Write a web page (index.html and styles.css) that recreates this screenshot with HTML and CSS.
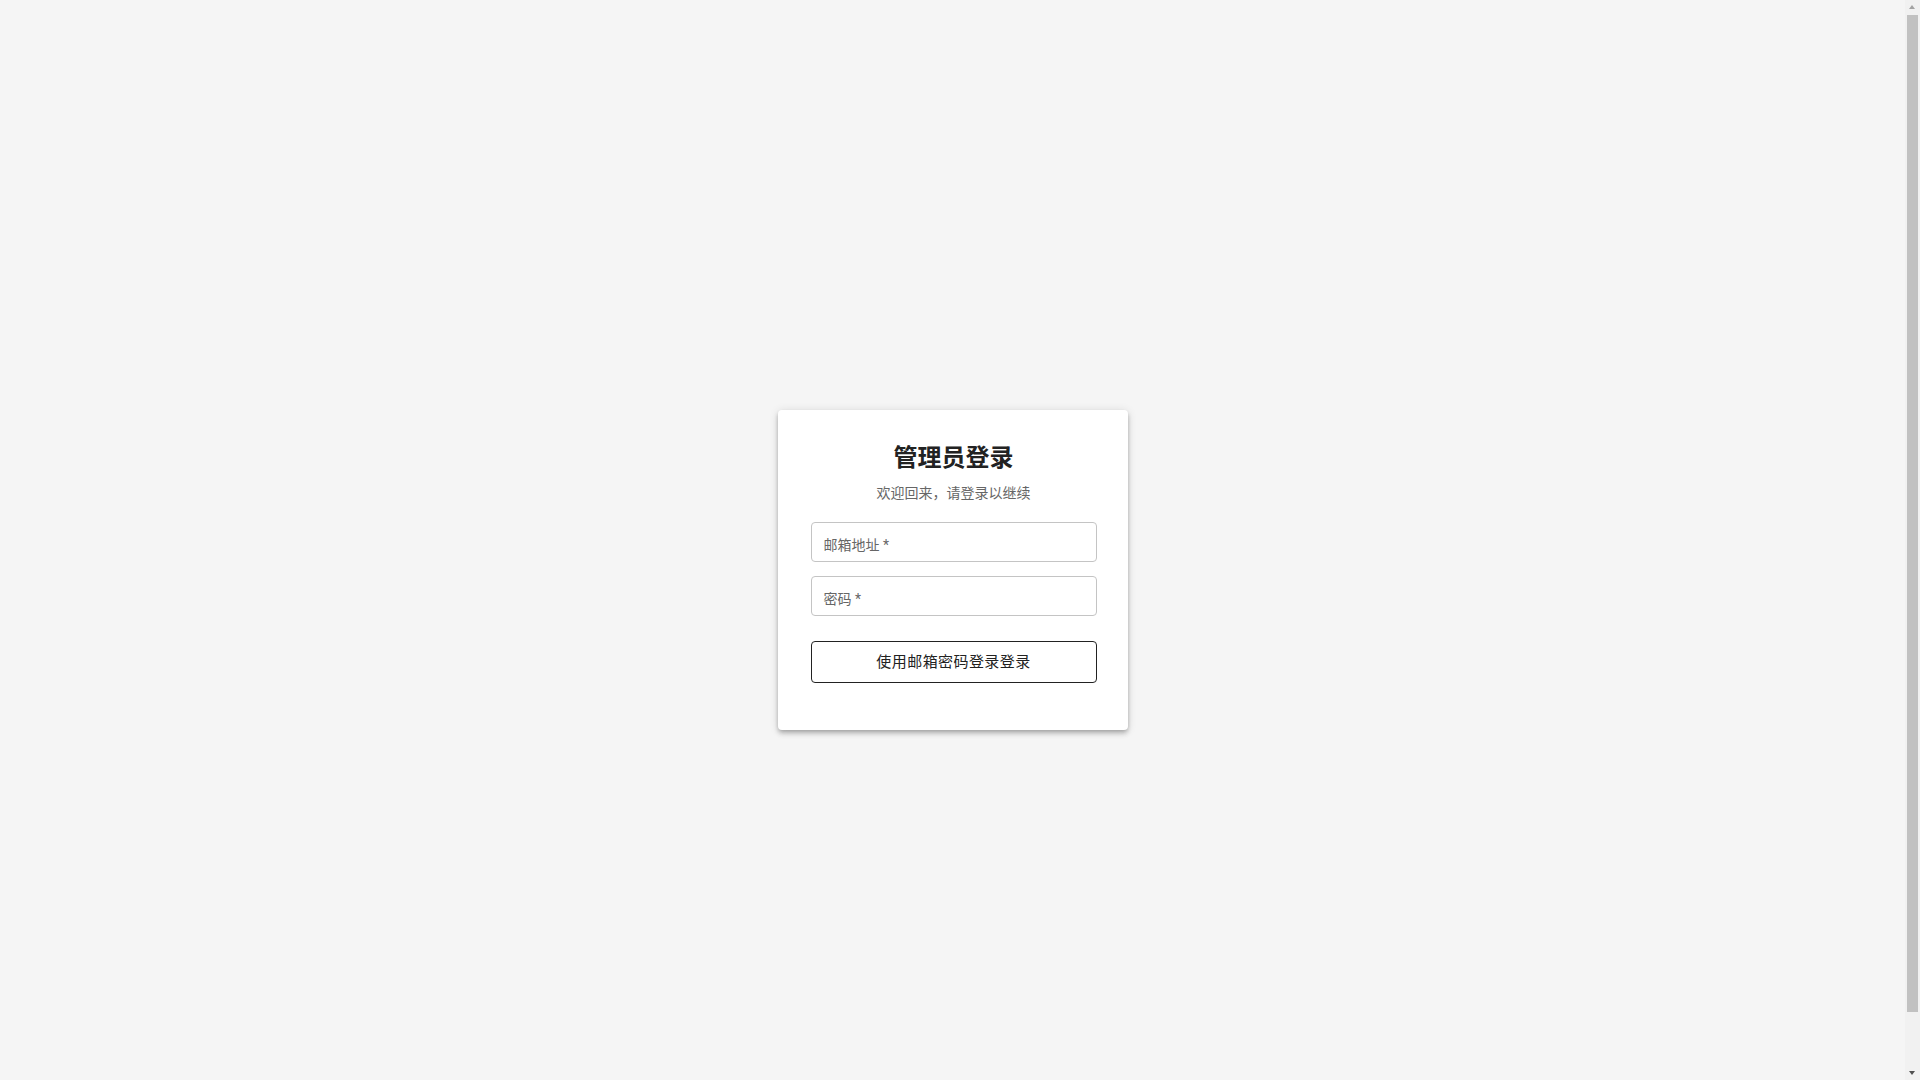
FILE: index.html
```html
<!DOCTYPE html>
<html lang="zh-CN">
<head>
<meta charset="utf-8">
<title>管理员登录</title>
<link rel="stylesheet" href="styles.css">
</head>
<body>
<main class="page">
  <section class="card">
    <h1 class="title">管理员登录</h1>
    <p class="subtitle">欢迎回来，请登录以继续</p>
    <form class="form">
      <label class="field">
        <span class="field-label">邮箱地址 *</span>
        <input class="field-input" type="email">
      </label>
      <label class="field">
        <span class="field-label">密码 *</span>
        <input class="field-input" type="password">
      </label>
      <button class="btn" type="button">使用邮箱密码登录登录</button>
    </form>
  </section>
</main>
<div class="scrollbar" aria-hidden="true">
  <span class="sb-arrow sb-up"></span>
  <span class="sb-thumb"></span>
  <span class="sb-arrow sb-down"></span>
</div>
</body>
</html>
```
FILE: styles.css
```css
html, body {
  margin: 0;
  padding: 0;
  background: #f5f5f5;
}
body {
  font-family: "Roboto", "Noto Sans CJK SC", sans-serif;
  color: rgba(0, 0, 0, 0.87);
}
.page {
  min-height: 100vh;
  padding: 30px 15px 27px 0;
  display: flex;
  align-items: center;
  justify-content: center;
}
.card {
  width: 350px;
  box-sizing: border-box;
  background: #fff;
  border-radius: 4px;
  padding: 32px 31px 47px 33px;
  box-shadow: 0 2px 4px -1px rgba(0,0,0,0.2), 0 4px 5px 0 rgba(0,0,0,0.14), 0 1px 10px 0 rgba(0,0,0,0.12);
  display: flex;
  flex-direction: column;
}
.title {
  margin: 0;
  font-size: 24px;
  line-height: 32px;
  font-weight: 700;
  text-align: center;
  color: #222;
}
.subtitle {
  margin: 9px 0 0;
  font-size: 14px;
  line-height: 20px;
  text-align: center;
  color: #666;
}
.form {
  margin-top: 19px;
  display: flex;
  flex-direction: column;
}
.field {
  position: relative;
  display: block;
  height: 40px;
  margin-bottom: 14px;
}
.field-input {
  box-sizing: border-box;
  width: 100%;
  height: 40px;
  margin: 0;
  border: 1px solid #c4c4c4;
  border-radius: 4px;
  background: transparent;
  outline: none;
  font: inherit;
}
.field-label {
  position: absolute;
  left: 13px;
  top: 13px;
  font-size: 14px;
  line-height: 20px;
  color: #666;
  pointer-events: none;
}
.btn {
  margin-top: 11px;
  height: 42px;
  box-sizing: border-box;
  width: 100%;
  border: 1px solid #222;
  border-radius: 4px;
  background: #fff;
  color: #222;
  font-family: "Roboto", "Noto Sans CJK SC", sans-serif;
  font-size: 15px;
  letter-spacing: 0.02857em;
  line-height: 20px;
  cursor: pointer;
}

/* simulated browser scrollbar */
.scrollbar {
  position: fixed;
  top: 0;
  right: 0;
  width: 15px;
  height: 100vh;
  background: #f1f1f1;
  display: flex;
  flex-direction: column;
  align-items: center;
}
.sb-arrow {
  flex: 0 0 15px;
  width: 15px;
  position: relative;
}
.sb-arrow::before {
  content: "";
  position: absolute;
  left: 4px;
  width: 0;
  height: 0;
  border-left: 3.5px solid transparent;
  border-right: 3.5px solid transparent;
}
.sb-up::before {
  top: 5px;
  border-bottom: 4px solid #a3a3a3;
}
.sb-down::before {
  top: 6px;
  border-top: 4px solid #505050;
}
.sb-thumb {
  width: 11px;
  height: 997px;
  background: #c1c1c1;
}
.sb-down {
  margin-top: auto;
}
```
